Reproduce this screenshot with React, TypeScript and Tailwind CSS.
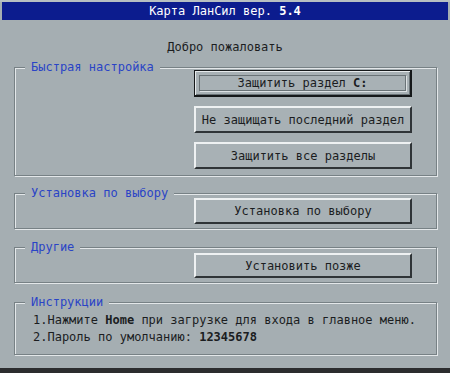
import React from "react";

const font = { fontFamily: '"DejaVu Sans Mono", "Liberation Mono", monospace' };

function Btn({ children, focused }: { children: React.ReactNode; focused?: boolean }) {
  if (focused) {
    return (
      <div className="relative w-[218px] h-[27px] border border-[#15181a] border-r-2 border-b-2 bg-[#a8b1b5] shadow-[inset_1px_1px_0_#e6eaec,inset_-1px_-1px_0_#6a7377] flex items-center justify-center text-[12px] leading-[14px] text-[#1b1d1f]">
        <div className="absolute left-[4px] top-[4px] right-[4px] bottom-[4px] border border-[#6a7377] shadow-[1px_1px_0_#dde2e4]" />
        <span className="relative">{children}</span>
      </div>
    );
  }
  return (
    <div className="w-[218px] h-full border-2 border-t-[#eef1f2] border-l-[#eef1f2] border-r-[#2f3437] border-b-[#2f3437] bg-[#a8b1b5] flex items-center justify-center text-[12px] leading-[14px] text-[#1b1d1f]">
      {children}
    </div>
  );
}

function Group({ label, className, children }: { label: string; className: string; children: React.ReactNode }) {
  return (
    <div className={"relative ml-[14px] w-[423px] border border-[#778185] shadow-[inset_1px_1px_0_#e3e7e9,1px_1px_0_#e3e7e9] " + className}>
      <div className="absolute left-[10px] top-[-8px] px-[6px] bg-[#a5aeb2] text-[12px] leading-[14px] text-[#2a44c6]">
        {label}
      </div>
      {children}
    </div>
  );
}

export default function App() {
  return (
    <div style={font} className="w-[450px] h-[373px] bg-[#a5aeb2] overflow-hidden flex flex-col">
      <div className="h-[2px] bg-[#b7bfc2]" />
      <div className="mx-[2px] h-[18px] bg-[#0c1c8e] flex items-center justify-center text-white text-[12px] leading-[14px] whitespace-pre">
        Карта ЛанСил вер. <b>5.4</b>
      </div>
      <div className="mt-[20px] h-[14px] leading-[14px] text-[12px] text-center text-[#1b1d1f]">Добро пожаловать</div>
      <Group label="Быстрая настройка" className="mt-[13px] h-[109px] pt-[2px] pr-[24px]">
        <div className="flex flex-col items-end gap-[9px]">
          <Btn focused>
            <span className="whitespace-pre">Защитить раздел <b>C:</b></span>
          </Btn>
          <div className="h-[27px]"><Btn>Не защищать последний раздел</Btn></div>
          <div className="h-[27px]"><Btn>Защитить все разделы</Btn></div>
        </div>
      </Group>
      <Group label="Установка по выбору" className="mt-[17px] h-[36px] pt-[4px] pr-[24px]">
        <div className="flex justify-end h-[26px]"><Btn>Установка по выбору</Btn></div>
      </Group>
      <Group label="Другие" className="mt-[18px] h-[36px] pt-[5px] pr-[24px]">
        <div className="flex justify-end h-[25px]"><Btn>Установить позже</Btn></div>
      </Group>
      <Group label="Инструкции" className="mt-[19px] h-[53px] pt-[9px] pl-[18px]">
        <div className="text-[12px] leading-[17px] text-[#1b1d1f] whitespace-nowrap">
          <div>1.Нажмите <b>Home</b> при загрузке для входа в главное меню.</div>
          <div>2.Пароль по умолчанию: <b>12345678</b></div>
        </div>
      </Group>
      <div className="flex-1" />
      <div className="h-[5px] bg-[#2c2d2f]" />
    </div>
  );
}
